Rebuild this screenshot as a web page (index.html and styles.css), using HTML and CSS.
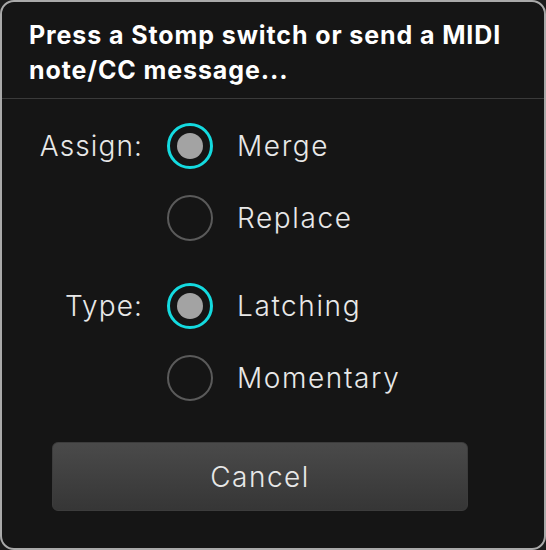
FILE: index.html
```html
<!DOCTYPE html>
<html lang="en">
<head>
    <meta charset="UTF-8">
    <meta name="viewport" content="width=device-width, initial-scale=1.0">
    <title>Learn Assignment</title>
    <link rel="stylesheet" href="styles.css">
</head>
<body>
    <div class="dialog">
        <div class="dialog-header">
            <h1>Press a Stomp switch or send a MIDI note/CC message...</h1>
        </div>

        <div class="dialog-body">
            <div class="option-group">
                <div class="group-label">Assign:</div>
                <div class="options">
                    <label class="option">
                        <span class="radio selected"></span>
                        <span class="option-text">Merge</span>
                    </label>
                    <label class="option">
                        <span class="radio"></span>
                        <span class="option-text">Replace</span>
                    </label>
                </div>
            </div>

            <div class="option-group">
                <div class="group-label">Type:</div>
                <div class="options">
                    <label class="option">
                        <span class="radio selected"></span>
                        <span class="option-text">Latching</span>
                    </label>
                    <label class="option">
                        <span class="radio"></span>
                        <span class="option-text">Momentary</span>
                    </label>
                </div>
            </div>

            <button class="cancel-button">Cancel</button>
        </div>
    </div>
</body>
</html>
```

FILE: styles.css
```css
* {
    box-sizing: border-box;
}

body {
    margin: 0;
    background: #1c1c1c;
    font-family: Inter, 'Noto Sans', sans-serif;
    color: #ffffff;
}

.dialog {
    width: 546px;
    height: 550px;
    background: #151515;
    border: 2px solid #a9a9a9;
    border-radius: 14px;
    overflow: hidden;
}

.dialog-header {
    padding: 16px 20px 10px 27px;
    border-bottom: 1px solid #3a3a3a;
}

h1 {
    margin: 0;
    font-size: 25px;
    font-weight: 700;
    line-height: 35px;
    letter-spacing: 0.9px;
    color: #ffffff;
}

.dialog-body {
    padding-top: 24px;
}

.option-group {
    display: flex;
    margin-bottom: 42px;
}

.group-label {
    width: 141px;
    text-align: right;
    font-size: 28px;
    font-weight: 350;
    letter-spacing: 1.1px;
    line-height: 46px;
    color: #e8e8e8;
}

.options {
    display: flex;
    flex-direction: column;
    gap: 26px;
    margin-left: 24px;
}

.option {
    display: flex;
    align-items: center;
    gap: 24px;
    height: 46px;
}

.radio {
    width: 46px;
    height: 46px;
    border-radius: 50%;
    border: 2px solid #5a5a5a;
    display: flex;
    align-items: center;
    justify-content: center;
}

.radio.selected {
    border: 3px solid #14dbe0;
}

.radio.selected::after {
    content: "";
    width: 26px;
    height: 26px;
    border-radius: 50%;
    background: #a3a3a3;
}

.option-text {
    font-size: 28px;
    font-weight: 350;
    letter-spacing: 1.6px;
    color: #e8e8e8;
}

.cancel-button {
    display: block;
    margin: -1px 0 0 50px;
    width: 416px;
    height: 69px;
    border: 1px solid #3c3c3c;
    border-radius: 6px;
    background: linear-gradient(180deg, #4a4a4a, #363636);
    font-family: Inter, 'Noto Sans', sans-serif;
    font-size: 28px;
    font-weight: 350;
    letter-spacing: 1.5px;
    color: #e8e8e8;
    cursor: pointer;
}
```
